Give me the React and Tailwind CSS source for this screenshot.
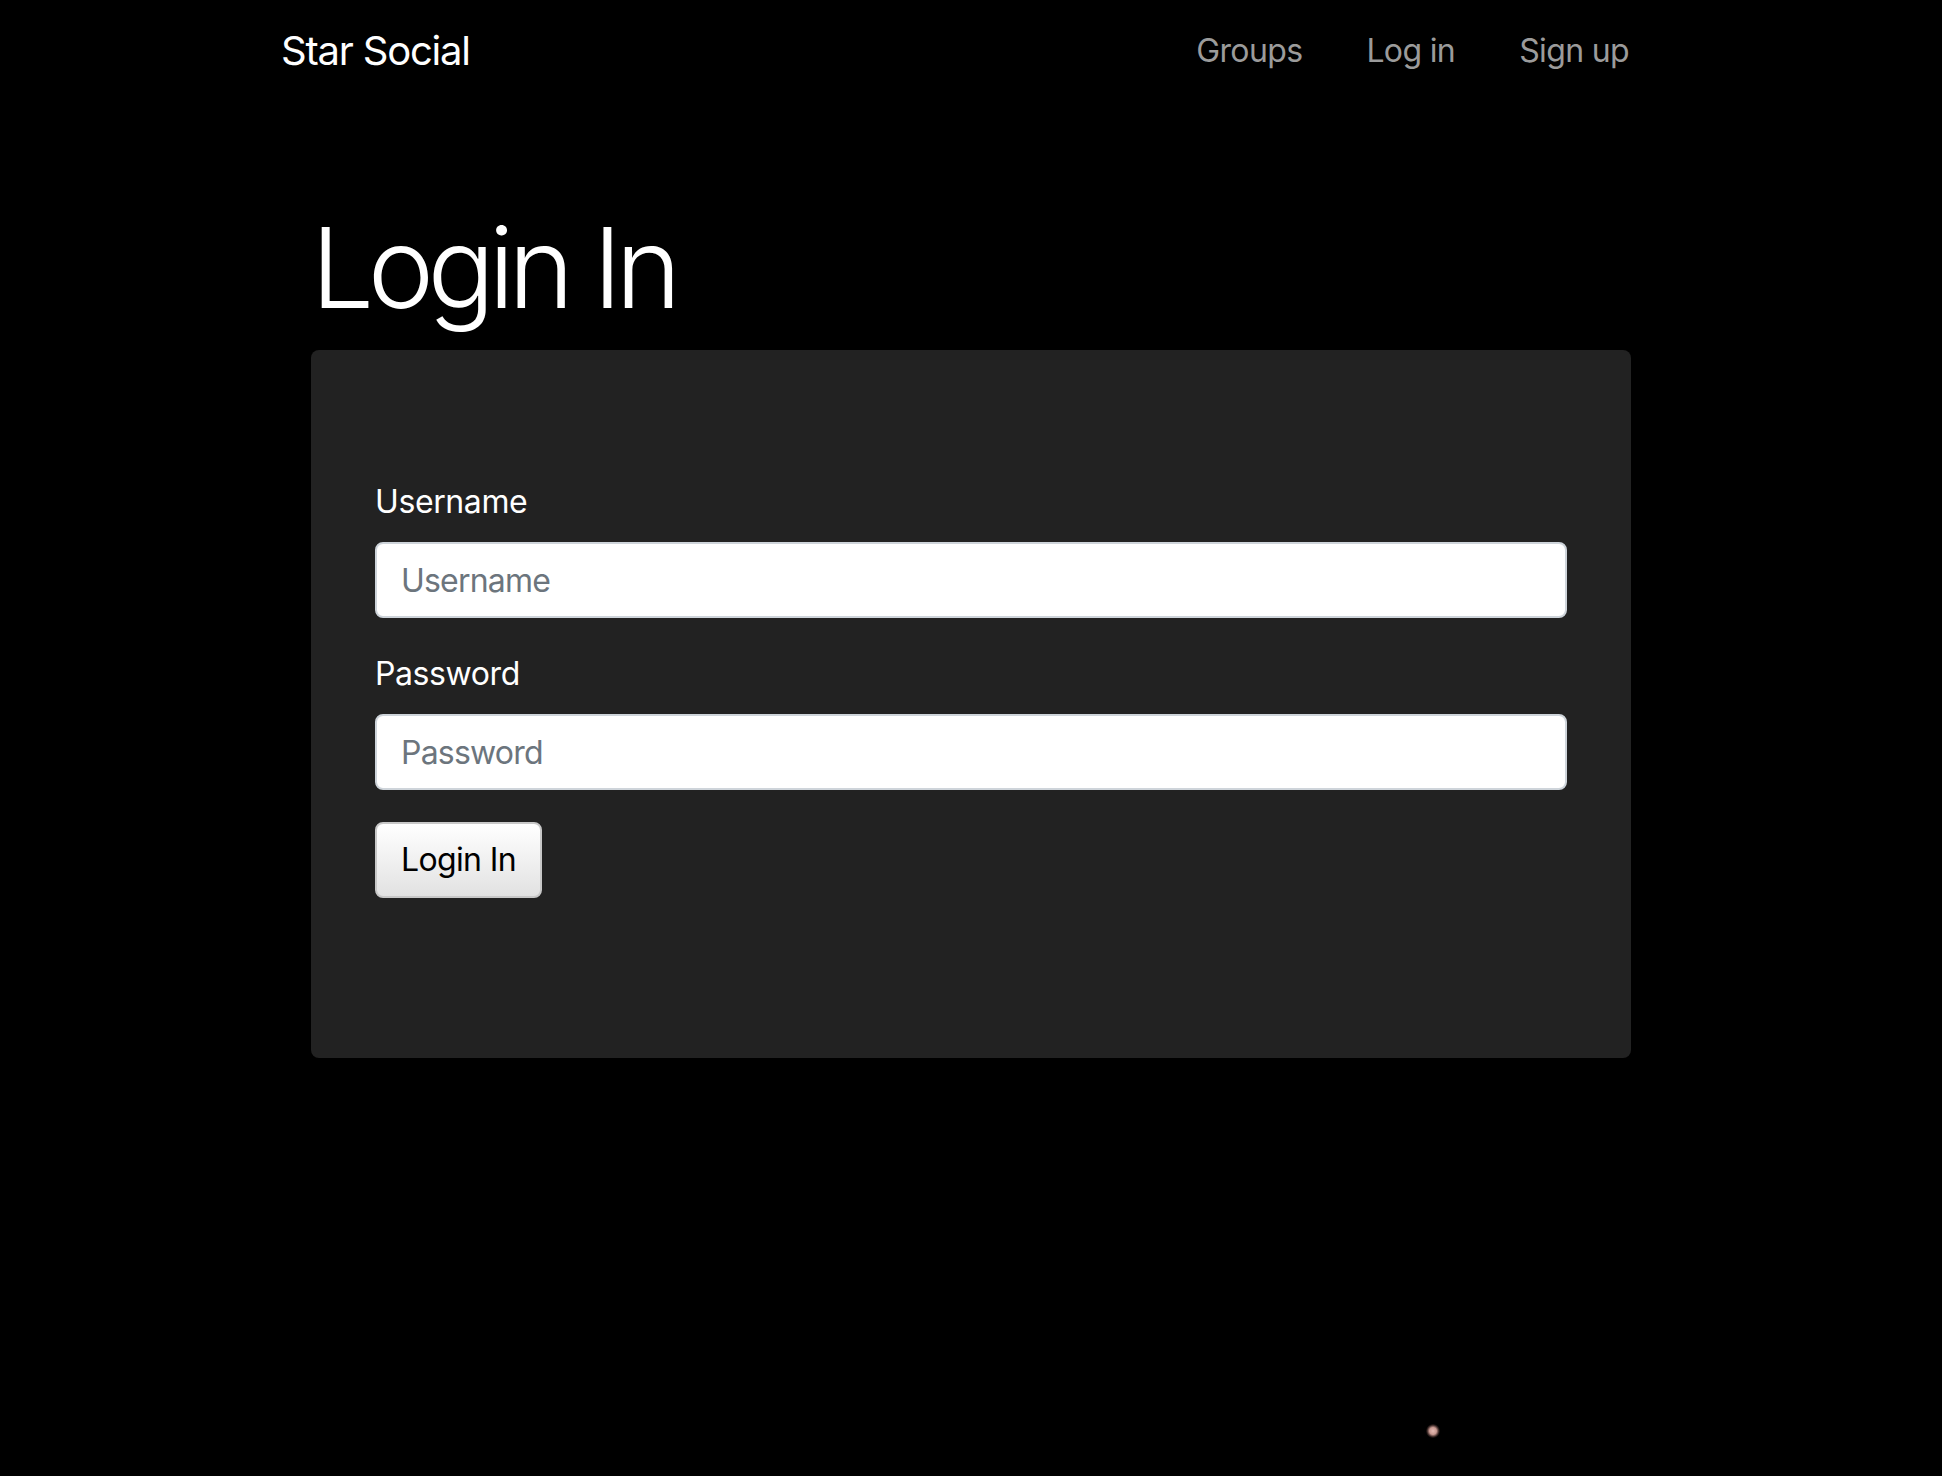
import React, { useState } from "react";

const NavLink = ({ children }) => (
  <a href="#" className="px-8 text-[32px] leading-[48px] tracking-[-0.02em] text-[#9b9b9b] no-underline">
    {children}
  </a>
);

const App = () => {
  const [username, setUsername] = useState("");
  const [password, setPassword] = useState("");

  return (
    <div
      className="relative min-h-[1476px] w-full bg-black text-white overflow-hidden"
      style={{ fontFamily: "Inter, 'Liberation Sans', sans-serif" }}
    >
      {/* navbar */}
      <header className="h-[80px] pt-[21px]">
        <div className="w-[1380px] mx-auto flex items-center justify-between">
          <a href="#" className="text-[40px] leading-[60px] tracking-[-0.03em] text-white">
            Star Social
          </a>
          <nav className="flex items-center">
            <NavLink>Groups</NavLink>
            <NavLink>Log in</NavLink>
            <NavLink>Sign up</NavLink>
          </nav>
        </div>
      </header>

      <main className="w-[1320px] mx-auto pt-[120px]">
        <h1 className="text-[112px] leading-[1.2] font-light tracking-[-0.058em] mb-4">Login In</h1>

        <div className="bg-[#222222] rounded-[8px] px-16 pt-32 pb-40">
          <form onSubmit={(e) => e.preventDefault()} className="tracking-[-0.025em]">
            <div className="mb-8">
              <label htmlFor="username" className="block text-[32px] leading-[48px] mb-4">
                Username
              </label>
              <input
                id="username"
                type="text"
                placeholder="Username"
                value={username}
                onChange={(e) => setUsername(e.target.value)}
                className="block w-full h-[76px] px-6 text-[32px] tracking-[-0.025em] text-[#495057] bg-white border-2 border-[#ced4da] rounded-[8px] placeholder:text-[#6c757d] outline-none"
              />
            </div>
            <div className="mb-8">
              <label htmlFor="password" className="block text-[32px] leading-[48px] mb-4">
                Password
              </label>
              <input
                id="password"
                type="password"
                placeholder="Password"
                value={password}
                onChange={(e) => setPassword(e.target.value)}
                className="block w-full h-[76px] px-6 text-[32px] tracking-[-0.025em] text-[#495057] bg-white border-2 border-[#ced4da] rounded-[8px] placeholder:text-[#6c757d] outline-none"
              />
            </div>
            <button
              type="submit"
              className="h-[76px] px-6 text-[32px] tracking-[-0.02em] text-black bg-gradient-to-b from-white to-[#e2e2e2] border-2 border-[#c8c8c8] rounded-[8px]"
            >
              Login In
            </button>
          </form>
        </div>
      </main>

      {/* little star */}
      <div className="absolute left-[1426px] top-[1424px] w-[14px] h-[14px] rounded-full bg-[radial-gradient(circle,#e6bcb4_0%,#c99a92_35%,rgba(120,80,75,0.4)_60%,rgba(0,0,0,0)_75%)]" />
    </div>
  );
};

export default App;
